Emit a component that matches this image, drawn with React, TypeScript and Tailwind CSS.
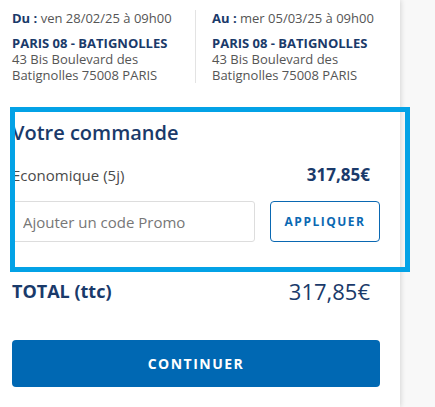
import React from 'react';

interface Stop {
  label: string;
  date: string;
  agency: string;
  address: string;
}

const stops: Stop[] = [
  {
    label: 'Du :',
    date: 'ven 28/02/25 à 09h00',
    agency: 'PARIS 08 - BATIGNOLLES',
    address: '43 Bis Boulevard des Batignolles 75008 PARIS',
  },
  {
    label: 'Au :',
    date: 'mer 05/03/25 à 09h00',
    agency: 'PARIS 08 - BATIGNOLLES',
    address: '43 Bis Boulevard des Batignolles 75008 PARIS',
  },
];

function StopInfo({ stop, first }: { stop: Stop; first?: boolean }) {
  return (
    <div className={first ? 'border-r border-[#e3e3e3] pr-3' : 'pl-4'}>
      <p className="text-[13px] leading-4 text-[#555]">
        <span className="font-bold text-[#1a3a6a]">{stop.label}</span> {stop.date}
      </p>
      <p className="mt-[9px] text-[13px] leading-4 font-bold text-[#1a3a6a]">{stop.agency}</p>
      <p className="text-[13px] leading-4 text-[#555]">{stop.address}</p>
    </div>
  );
}

export default function App() {
  return (
    <div className="min-h-screen bg-[#f8f8f8] font-['Open_Sans',sans-serif]">
      <div className="relative min-h-screen w-[400px] bg-white pl-3 pr-5 pt-[10px] shadow-[1px_0_5px_rgba(0,0,0,0.14)]">
        <div className="grid grid-cols-2">
          {stops.map((stop, i) => (
            <StopInfo key={stop.label} stop={stop} first={i === 0} />
          ))}
        </div>

        <h2 className="mt-[36px] text-[20px] leading-7 font-semibold text-[#1a3a6a]">Votre commande</h2>

        <div className="mt-[17px] flex items-center justify-between pr-[10px]">
          <span className="text-[15px] leading-[22px] text-[#4a4a4a]">Economique (5j)</span>
          <span className="text-[17px] leading-[22px] font-bold text-[#1a3a6a]">317,85€</span>
        </div>

        <div className="mt-[15px] flex h-[41px] gap-[15px]">
          <input
            className="h-full flex-1 rounded-[3px] border border-[#dddddd] px-[10px] text-[15px] text-[#333] outline-none placeholder:text-[#777]"
            placeholder="Ajouter un code Promo"
          />
          <button className="h-full w-[110px] rounded-[4px] border border-[#0a68b2] text-[12px] font-bold tracking-[1.5px] text-[#0a68b2]">
            APPLIQUER
          </button>
        </div>

        <div className="mt-[34px] flex items-center justify-between pr-[10px]">
          <span className="text-[18px] leading-[30px] font-bold text-[#1a3a6a]">TOTAL (ttc)</span>
          <span className="text-[22px] leading-[30px] text-[#1a3a6a]">317,85€</span>
        </div>

        <button className="mt-[34px] h-[47px] w-full rounded-[4px] bg-[#0068b3] text-[14px] font-bold tracking-[1.5px] text-white">
          CONTINUER
        </button>

        <div className="pointer-events-none absolute left-[10px] top-[107px] h-[165px] w-[400px] border-[5px] border-[#03a2e6]" />
      </div>
    </div>
  );
}
